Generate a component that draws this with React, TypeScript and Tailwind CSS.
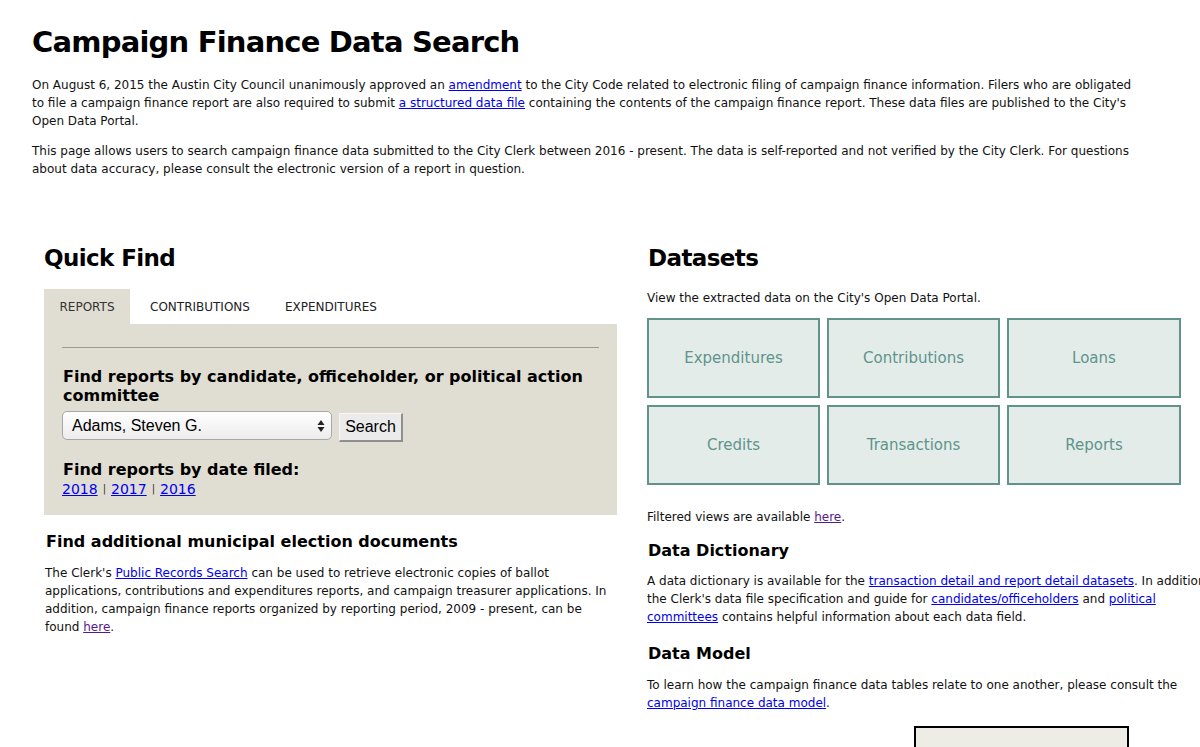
import React from "react";

const A = ({ children, visited }: { children: React.ReactNode; visited?: boolean }) => (
  <a href="#" className={visited ? "text-[#551a8b] underline" : "text-[#0000ee] underline"}>
    {children}
  </a>
);

const tiles = ["Expenditures", "Contributions", "Loans", "Credits", "Transactions", "Reports"];

export default function App() {
  return (
    <div
      className="w-[1200px] h-[747px] overflow-hidden bg-white text-[#111]"
      style={{ fontFamily: '"DejaVu Sans", Verdana, sans-serif' }}
    >
      <div className="w-[1240px]">
        <div className="pl-[32px] w-[1142px]">
          <h1 className="mt-[24px] text-[29px] leading-[36px] font-bold tracking-[-0.8px] text-black">
            Campaign Finance Data Search
          </h1>
          <p className="mt-[16px] text-[12px] leading-[18px]">
            On August 6, 2015 the Austin City Council unanimously approved an <A>amendment</A> to the City Code related to
            electronic filing of campaign finance information. Filers who are obligated to file a campaign finance report are
            also required to submit <A>a structured data file</A> containing the contents of the campaign finance report.
            These data files are published to the City's Open Data Portal.
          </p>
          <p className="mt-[12px] text-[12px] leading-[18px]">
            This page allows users to search campaign finance data submitted to the City Clerk between 2016 - present. The
            data is self-reported and not verified by the City Clerk. For questions about data accuracy, please consult the
            electronic version of a report in question.
          </p>
        </div>

        <div className="flex pl-[44px] gap-[30px] mt-[66px]">
          {/* Left column */}
          <div className="w-[573px] shrink-0">
            <h2 className="text-[23px] leading-[28px] font-bold tracking-[-0.6px] text-black">Quick Find</h2>
            <div className="mt-[17px] flex h-[35px] text-[12px]">
              <div className="w-[86px] bg-[#e0ddd2] flex items-center justify-center text-[#333]">REPORTS</div>
              <div className="pl-[20px] pr-[35px] flex items-center text-[#222]">CONTRIBUTIONS</div>
              <div className="flex items-center text-[#222]">EXPENDITURES</div>
            </div>
            <div className="bg-[#e0ddd2] h-[191px] px-[18px] pt-[23px]">
              <div className="h-px bg-[#999]" />
              <h3 className="mt-[19px] ml-[1px] text-[16px] leading-[19px] font-bold text-black">
                Find reports by candidate, officeholder, or political action committee
              </h3>
              <div className="mt-[6px] flex items-start gap-[7px]">
                <div
                  className="w-[270px] h-[29px] rounded-[5px] border border-[#a8a8a8] bg-gradient-to-b from-white to-[#ececec] flex items-center justify-between pl-[9px] pr-[6px] text-[16px] text-black"
                  style={{ fontFamily: '"Liberation Sans", Arial, sans-serif' }}
                >
                  <span>Adams, Steven G.</span>
                  <svg width="8" height="14" viewBox="0 0 8 14">
                    <path d="M4 1 L7.5 6 L0.5 6 Z" fill="#222" />
                    <path d="M4 13 L7.5 8 L0.5 8 Z" fill="#222" />
                  </svg>
                </div>
                <div
                  className="mt-[2px] w-[64px] h-[29px] bg-[#ebebeb] border-t border-l border-t-[#f6f6f6] border-l-[#f6f6f6] border-r-2 border-b-2 border-r-[#8f8f8f] border-b-[#8f8f8f] flex items-center justify-center text-[16px] text-black"
                  style={{ fontFamily: '"Liberation Sans", Arial, sans-serif' }}
                >
                  Search
                </div>
              </div>
              <h3 className="mt-[18px] ml-[1px] text-[16px] leading-[19px] font-bold text-black">
                Find reports by date filed:
              </h3>
              <div className="text-[14px] leading-[20px] flex items-center gap-[5px]">
                <A>2018</A>
                <span className="text-[10px] text-[#333]">|</span>
                <A>2017</A>
                <span className="text-[10px] text-[#333]">|</span>
                <A>2016</A>
              </div>
            </div>
            <h3 className="mt-[17px] ml-[2px] text-[16px] leading-[20px] font-bold text-black">
              Find additional municipal election documents
            </h3>
            <p className="mt-[12px] ml-[1px] text-[12px] leading-[18px]">
              The Clerk's <A>Public Records Search</A> can be used to retrieve electronic copies of ballot applications,
              contributions and expenditures reports, and campaign treasurer applications. In addition, campaign finance
              reports organized by reporting period, 2009 - present, can be found <A visited>here</A>.
            </p>
          </div>

          {/* Right column */}
          <div className="w-[575px] shrink-0">
            <h2 className="ml-[1px] text-[23px] leading-[28px] font-bold tracking-[-0.6px] text-black">Datasets</h2>
            <p className="mt-[17px] text-[12px] leading-[18px]">View the extracted data on the City's Open Data Portal.</p>
            <div className="mt-[11px] grid grid-cols-[173px_173px_174px] gap-x-[7px] gap-y-[7px]">
              {tiles.map((t) => (
                <div
                  key={t}
                  className="h-[80px] border-2 border-[#62938a] bg-[#e4ecea] flex items-center justify-center text-[15px] text-[#5f948b]"
                >
                  {t}
                </div>
              ))}
            </div>
            <p className="mt-[23px] text-[12px] leading-[18px]">
              Filtered views are available <A visited>here</A>.
            </p>
            <h3 className="mt-[15px] ml-[1px] text-[16px] leading-[20px] font-bold text-black">Data Dictionary</h3>
            <p className="mt-[11px] text-[12px] leading-[18px]">
              A data dictionary is available for the <A>transaction detail and report detail datasets</A>. In addition,
              the Clerk's data file specification and guide for <A>candidates/officeholders</A> and <A>political committees</A>{" "}
              contains helpful information about each data field.
            </p>
            <h3 className="mt-[18px] ml-[1px] text-[16px] leading-[20px] font-bold text-black">Data Model</h3>
            <p className="mt-[12px] text-[12px] leading-[18px]">
              To learn how the campaign finance data tables relate to one another, please consult the{" "}
              <A>campaign finance data model</A>.
            </p>
            <div className="mt-[14px] ml-[267px] w-[215px] h-[60px] border-2 border-black bg-[#edece5]" />
          </div>
        </div>
      </div>
    </div>
  );
}
